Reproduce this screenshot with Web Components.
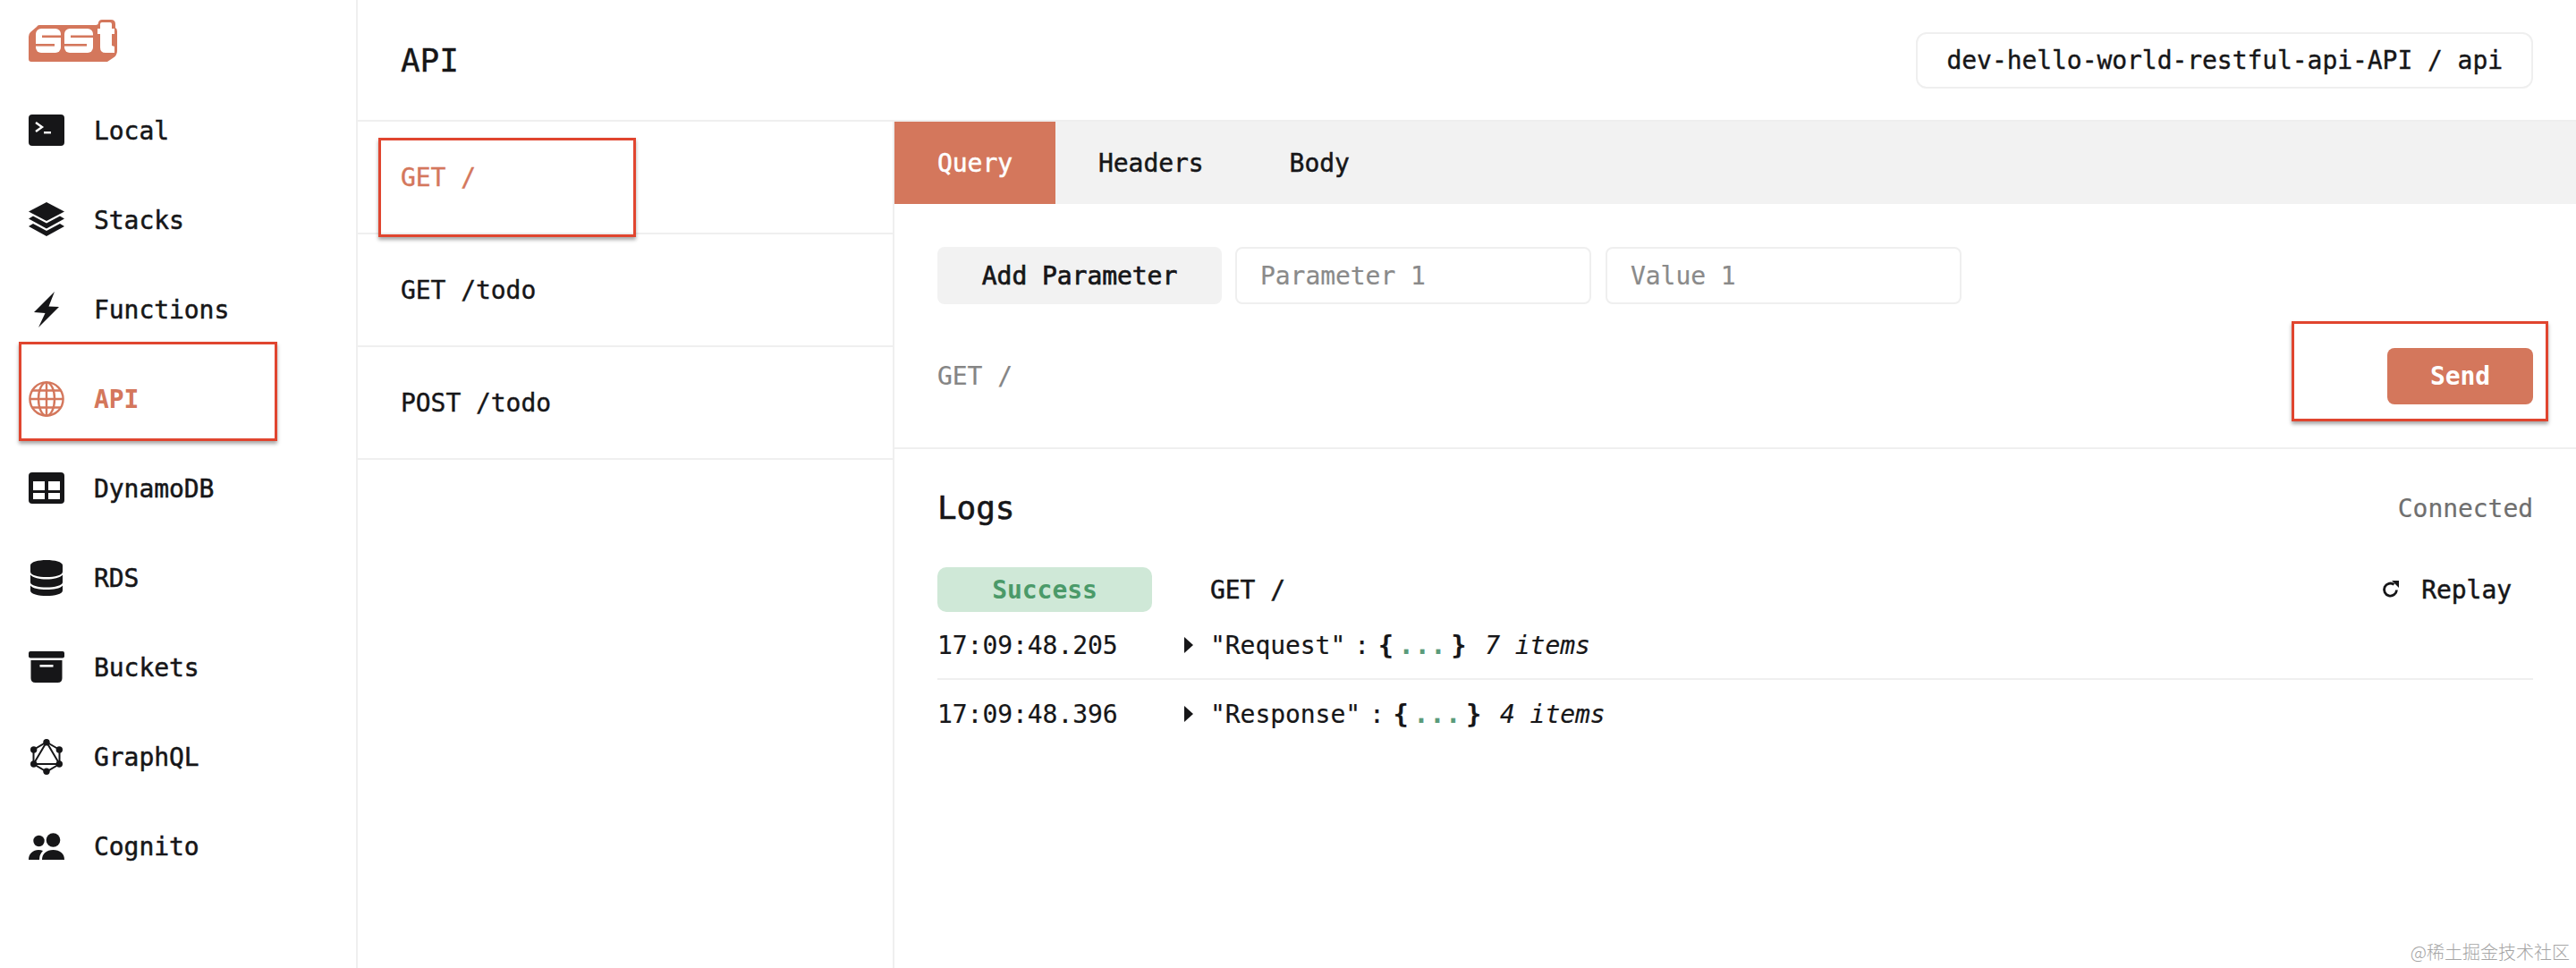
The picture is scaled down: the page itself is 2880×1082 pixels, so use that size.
<!DOCTYPE html>
<html lang="en">
<head>
<meta charset="utf-8">
<title>SST Console - API</title>
<style>
  html, body { margin: 0; background: #fff; }
  body {
    font-family: "DejaVu Sans Mono", "Liberation Mono", monospace;
    font-size: 28px;
    letter-spacing: -0.06px;
    color: #161618;
    -webkit-text-stroke: 0.2px currentColor;
  }
</style>
</head>
<body>

<sst-app>
  <sst-sidebar slot="sidebar">
    <svg slot="logo" width="99" height="49" viewBox="0 0 99 49">
      <path fill="#d4775c" d="M12 7H75Q78 7 78 4Q79 1 82 1H92Q97 1 97 6V10Q99 11 99 14V36Q99 41 94 44L88 48H3Q0 48 0 45V20Q0 17 2 15L9 9Q10 7 12 7Z"/>
      <g fill="#fff">
        <rect x="8" y="11" width="28" height="27" rx="6"/>
        <rect x="40" y="11" width="32" height="27" rx="6"/>
        <path d="M82 4H91Q93 4 93 6V11H96V17H93V30L96 31V38H86Q80 38 80 32V17H77V11H80V6Q80 4 82 4Z"/>
      </g>
      <g fill="#d4775c">
        <rect x="15" y="18.500" width="21" height="2.600"/>
        <rect x="8" y="28" width="21" height="2.600"/>
        <rect x="47" y="18.500" width="25" height="2.600"/>
        <rect x="40" y="28" width="25" height="2.600"/>
      </g>
    </svg>

    <sst-nav-item>
      <svg slot="icon" width="40" height="40" viewBox="0 0 40 40">
        <rect x="0" y="2" width="40" height="35" rx="4" fill="#161618"/>
        <path d="M8 11l7 5-7 5" fill="none" stroke="#fff" stroke-width="2.400"/>
        <rect x="17" y="21" width="8" height="2.400" fill="#fff"/>
      </svg>
      Local
    </sst-nav-item>
    <sst-nav-item>
      <svg slot="icon" width="40" height="40" viewBox="0 0 40 40" fill="#161618">
        <path d="M20 0L40 10.500 20 21 0 10.500Z"/>
        <path d="M5 15.500L20 23.400 35 15.500 40 18.500 20 29.500 0 18.500Z"/>
        <path d="M5 24L20 32 35 24 40 27 20 38 0 27Z"/>
      </svg>
      Stacks
    </sst-nav-item>
    <sst-nav-item>
      <svg slot="icon" width="40" height="40" viewBox="0 0 40 40" fill="#161618">
        <path d="M29 0L6 23L18.500 24L11 40L34 17L22.500 16.500Z"/>
      </svg>
      Functions
    </sst-nav-item>
    <sst-nav-item active>
      <svg slot="icon" width="40" height="40" viewBox="0 0 40 40" fill="none" stroke="#d4775c" stroke-width="2.400">
        <circle cx="20" cy="20" r="18.600"/>
        <ellipse cx="20" cy="20" rx="9" ry="18.600"/>
        <path d="M20 1.400V38.600M1.400 20H38.600M4 10.500H36M4 29.500H36"/>
      </svg>
      API
    </sst-nav-item>
    <sst-nav-item>
      <svg slot="icon" width="40" height="40" viewBox="0 0 40 40">
        <rect x="0" y="2" width="40" height="35" rx="4" fill="#161618"/>
        <path fill="#fff" d="M5 12H18V22H5ZM22 12H35V22H22ZM5 25H18V32H5ZM22 25H35V32H22Z"/>
      </svg>
      DynamoDB
    </sst-nav-item>
    <sst-nav-item>
      <svg slot="icon" width="40" height="40" viewBox="0 0 40 40" fill="#161618">
        <path d="M2 6C2 2 11 0 20 0S38 2 38 6V13C38 17 29 19 20 19S2 17 2 13Z"/>
        <path d="M2 16.500C5 20 12 21.500 20 21.500S35 20 38 16.500V25C38 28.500 29 30.500 20 30.500S2 28.500 2 25Z"/>
        <path d="M2 28.500C5 32 12 33 20 33S35 32 38 28.500V34C38 38 29 40 20 40S2 38 2 34Z"/>
      </svg>
      RDS
    </sst-nav-item>
    <sst-nav-item>
      <svg slot="icon" width="40" height="40" viewBox="0 0 40 40" fill="#161618">
        <rect x="0" y="2" width="40" height="7.500" rx="2"/>
        <path d="M2.500 12H37.500V32Q37.500 37 32.500 37H7.500Q2.500 37 2.500 32Z"/>
        <rect x="12.500" y="17" width="15" height="2.600" fill="#fff"/>
      </svg>
      Buckets
    </sst-nav-item>
    <sst-nav-item>
      <svg slot="icon" width="40" height="40" viewBox="0 0 40 40">
        <g fill="none" stroke="#161618" stroke-width="2">
          <path d="M20 3.500L34.500 12V28L20 36.500L5.500 28V12Z"/>
          <path d="M20 3.500L34.500 28H5.500Z"/>
        </g>
        <g fill="#161618">
          <circle cx="20" cy="3.700" r="3.700"/>
          <circle cx="34.300" cy="12" r="3.700"/>
          <circle cx="34.300" cy="28" r="3.700"/>
          <circle cx="20" cy="36.300" r="3.700"/>
          <circle cx="5.700" cy="28" r="3.700"/>
          <circle cx="5.700" cy="12" r="3.700"/>
        </g>
      </svg>
      GraphQL
    </sst-nav-item>
    <sst-nav-item>
      <svg slot="icon" width="40" height="40" viewBox="0 0 40 40" fill="#161618">
        <circle cx="11.500" cy="14" r="6.200"/>
        <circle cx="27.500" cy="13" r="7.800"/>
        <path d="M15 35C15 28 20 24 27.500 24S40 28 40 35Z"/>
        <path d="M0 35C0 28 5 24 11 24Q14 24 16 25Q12 29 12 35Z"/>
      </svg>
      Cognito
    </sst-nav-item>
  </sst-sidebar>

  <sst-header slot="header" title-text="API">dev-hello-world-restful-api-API / api</sst-header>

  <sst-route-list slot="routes">
    <sst-route active>GET /</sst-route>
    <sst-route>GET /todo</sst-route>
    <sst-route>POST /todo</sst-route>
  </sst-route-list>

  <sst-explorer slot="detail">
    <sst-tabs slot="tabs">
      <sst-tab active>Query</sst-tab>
      <sst-tab>Headers</sst-tab>
      <sst-tab>Body</sst-tab>
    </sst-tabs>
    <sst-request slot="request" route="GET /"></sst-request>
    <sst-logs slot="logs">
      <sst-log-row time="17:09:48.205" name="Request" count="7 items"></sst-log-row>
      <sst-log-row time="17:09:48.396" name="Response" count="4 items"></sst-log-row>
    </sst-logs>
  </sst-explorer>

  <sst-callout slot="overlay" style="left:21px;top:382px;width:289px;height:111px"></sst-callout>
  <sst-callout slot="overlay" style="left:423px;top:154px;width:288px;height:111px"></sst-callout>
  <sst-callout slot="overlay" style="left:2562px;top:359px;width:287px;height:112px"></sst-callout>
  <sst-watermark slot="overlay">@稀土掘金技术社区</sst-watermark>
</sst-app>

<script>
class SstApp extends HTMLElement {
  constructor() {
    super();
    const shadow = this.attachShadow({ mode: 'open' });
    shadow.innerHTML = `
      <style>
        :host {
          display: grid;
          position: relative;
          grid-template-columns: 400px 600px 1fr;
          grid-template-rows: 136px 1fr;
          height: 1082px;
          overflow: hidden;
        }
        .side { grid-row: 1 / 3; display: grid; }
        .head { grid-column: 2 / 4; display: grid; }
      </style>
      <div class="side"><slot name="sidebar"></slot></div>
      <div class="head"><slot name="header"></slot></div>
      <slot name="routes"></slot>
      <slot name="detail"></slot>
      <slot name="overlay"></slot>
    `;
  }
}

class SstSidebar extends HTMLElement {
  constructor() {
    super();
    const shadow = this.attachShadow({ mode: 'open' });
    shadow.innerHTML = `
      <style>
        :host {
          display: block;
          border-right: 2px solid #efefef;
          padding: 21px 0 0 32px;
        }
        .logo { height: 75px; }
        nav { display: flex; flex-direction: column; }
      </style>
      <div class="logo"><slot name="logo"></slot></div>
      <nav><slot></slot></nav>
    `;
  }
}

class SstNavItem extends HTMLElement {
  constructor() {
    super();
    const shadow = this.attachShadow({ mode: 'open' });
    shadow.innerHTML = `
      <style>
        :host {
          display: flex;
          align-items: center;
          gap: 33px;
          height: 100px;
          -webkit-text-stroke: 0.5px currentColor;
        }
        :host([active]) { color: #d4775c; font-weight: 700; -webkit-text-stroke: 0; }
        .icon { display: flex; width: 40px; height: 40px; }
      </style>
      <span class="icon"><slot name="icon"></slot></span>
      <span><slot></slot></span>
    `;
  }
}

class SstHeader extends HTMLElement {
  constructor() {
    super();
    const shadow = this.attachShadow({ mode: 'open' });
    shadow.innerHTML = `
      <style>
        :host {
          display: flex;
          align-items: center;
          justify-content: space-between;
          padding: 0 48px;
          border-bottom: 2px solid #efefef;
          -webkit-text-stroke: 0.4px currentColor;
        }
        h1 { margin: 0; font-size: 36px; font-weight: 400; }
        .pill {
          height: 63px;
          box-sizing: border-box;
          display: flex;
          align-items: center;
          padding: 0 32px;
          border: 2px solid #efefef;
          border-radius: 12px;
        }
      </style>
      <h1>${this.getAttribute('title-text')}</h1>
      <div class="pill"><slot></slot></div>
    `;
  }
}

class SstRouteList extends HTMLElement {
  constructor() {
    super();
    const shadow = this.attachShadow({ mode: 'open' });
    shadow.innerHTML = `
      <style>
        :host { display: block; border-right: 2px solid #efefef; }
      </style>
      <slot></slot>
    `;
  }
}

class SstRoute extends HTMLElement {
  constructor() {
    super();
    const shadow = this.attachShadow({ mode: 'open' });
    shadow.innerHTML = `
      <style>
        :host {
          display: flex;
          align-items: center;
          box-sizing: border-box;
          height: 126px;
          padding-left: 48px;
          border-bottom: 2px solid #efefef;
          -webkit-text-stroke: 0.4px currentColor;
        }
        :host([active]) { color: #d4775c; }
      </style>
      <slot></slot>
    `;
  }
}

class SstExplorer extends HTMLElement {
  constructor() {
    super();
    const shadow = this.attachShadow({ mode: 'open' });
    shadow.innerHTML = `
      <style>
        :host { display: flex; flex-direction: column; }
      </style>
      <slot name="tabs"></slot>
      <slot name="request"></slot>
      <slot name="logs"></slot>
    `;
  }
}

class SstTabs extends HTMLElement {
  constructor() {
    super();
    const shadow = this.attachShadow({ mode: 'open' });
    shadow.innerHTML = `
      <style>
        :host { display: flex; height: 92px; background: #f2f2f2; }
      </style>
      <slot></slot>
    `;
  }
}

class SstTab extends HTMLElement {
  constructor() {
    super();
    const shadow = this.attachShadow({ mode: 'open' });
    shadow.innerHTML = `
      <style>
        :host {
          display: flex;
          align-items: center;
          padding: 0 48px;
          -webkit-text-stroke: 0.5px currentColor;
        }
        :host([active]) { background: #d4775c; color: #fff; }
      </style>
      <slot></slot>
    `;
  }
}

class SstRequest extends HTMLElement {
  constructor() {
    super();
    const shadow = this.attachShadow({ mode: 'open' });
    shadow.innerHTML = `
      <style>
        :host {
          display: flex;
          flex-direction: column;
          gap: 49px;
          padding: 48px 48px 48px;
          border-bottom: 2px solid #efefef;
        }
        .params { display: flex; gap: 16px; height: 64px; }
        .add {
          width: 318px;
          display: flex;
          align-items: center;
          justify-content: center;
          background: #f2f2f2;
          border-radius: 8px;
          -webkit-text-stroke: 0.7px currentColor;
          margin-right: -1px;
        }
        .field {
          width: 398px;
          box-sizing: border-box;
          display: flex;
          align-items: center;
          padding-left: 26px;
          border: 2px solid #efefef;
          border-radius: 8px;
          color: #8a8a8a;
        }
        .send-row { display: flex; align-items: center; justify-content: space-between; }
        .route { color: #858585; }
        .send {
          width: 163px;
          height: 63px;
          display: flex;
          align-items: center;
          justify-content: center;
          background: #d4775c;
          color: #fff;
          border-radius: 8px;
          font-weight: 700;
          -webkit-text-stroke: 0;
        }
      </style>
      <div class="params">
        <div class="add">Add Parameter</div>
        <div class="field">Parameter 1</div>
        <div class="field">Value 1</div>
      </div>
      <div class="send-row">
        <span class="route">${this.getAttribute('route')}</span>
        <span class="send">Send</span>
      </div>
    `;
  }
}

class SstLogs extends HTMLElement {
  constructor() {
    super();
    const shadow = this.attachShadow({ mode: 'open' });
    shadow.innerHTML = `
      <style>
        :host { display: block; padding: 47px 48px 0; }
        .top { display: flex; align-items: center; justify-content: space-between; height: 36px; }
        h2 { margin: 0; font-size: 36px; font-weight: 400; -webkit-text-stroke: 0.6px currentColor; }
        .state { color: #6f6f6f; padding-top: 2px; }
        .entry { display: flex; align-items: center; height: 50px; margin-top: 49px; }
        .badge {
          width: 240px;
          height: 50px;
          display: flex;
          align-items: center;
          justify-content: center;
          background: #cfe8d7;
          color: #4b9a69;
          border-radius: 10px;
          font-weight: 700;
          -webkit-text-stroke: 0;
        }
        .method { margin-left: 65px; flex: 1; -webkit-text-stroke: 0.5px currentColor; }
        .replay {
          display: flex;
          align-items: center;
          gap: 24px;
          padding-right: 24px;
          -webkit-text-stroke: 0.5px currentColor;
        }
      </style>
      <div class="top"><h2>Logs</h2><span class="state">Connected</span></div>
      <div class="entry">
        <span class="badge">Success</span>
        <span class="method">GET /</span>
        <span class="replay">
          <svg width="20" height="20" viewBox="0 0 20 20" fill="none">
            <path d="M16.500 10.500A7 7 0 1 1 13.500 4.300" stroke="#161618" stroke-width="2.800"/>
            <path d="M11 0H19V8Z" fill="#161618"/>
          </svg>
          Replay
        </span>
      </div>
      <slot></slot>
    `;
  }
}

class SstLogRow extends HTMLElement {
  constructor() {
    super();
    const shadow = this.attachShadow({ mode: 'open' });
    shadow.innerHTML = `
      <style>
        :host {
          display: flex;
          align-items: center;
          height: 76px;
          box-sizing: border-box;
          border-bottom: 2px solid #efefef;
        }
        :host(:last-child) { border-bottom: 0; }
        .time { width: 276px; }
        .caret {
          width: 0;
          height: 0;
          border-left: 10px solid #161618;
          border-top: 9px solid transparent;
          border-bottom: 9px solid transparent;
          margin-right: 19px;
        }
        .colon { margin: 0 8px 0 10px; }
        .brace { font-weight: 700; margin-left: 2px; }
        .dots { color: #5a9b7a; font-weight: 700; letter-spacing: 1px; margin: 0 5px 0 6px; }
        .count { font-style: italic; margin-left: 21px; }
      </style>
      <span class="time">${this.getAttribute('time')}</span>
      <span class="caret"></span>
      <span>"${this.getAttribute('name')}"</span>
      <span class="colon">:</span>
      <span class="brace">{</span>
      <span class="dots">...</span>
      <span class="brace" style="margin-left:0">}</span>
      <span class="count">${this.getAttribute('count')}</span>
    `;
  }
}

class SstCallout extends HTMLElement {
  constructor() {
    super();
    const shadow = this.attachShadow({ mode: 'open' });
    shadow.innerHTML = `
      <style>
        :host {
          position: absolute;
          box-sizing: border-box;
          border: 3px solid #e0452f;
          box-shadow: 0 3px 4px rgba(0, 0, 0, 0.35);
        }
      </style>
    `;
  }
}

class SstWatermark extends HTMLElement {
  constructor() {
    super();
    const shadow = this.attachShadow({ mode: 'open' });
    shadow.innerHTML = `
      <style>
        :host {
          position: absolute;
          right: 7px;
          bottom: 4px;
          font-family: "Noto Sans CJK SC", "Noto Sans", sans-serif;
          font-size: 20px;
          font-weight: 300;
          letter-spacing: 0;
          -webkit-text-stroke: 0;
          color: #a5a5a5;
        }
      </style>
      <slot></slot>
    `;
  }
}

customElements.define('sst-app', SstApp);
customElements.define('sst-sidebar', SstSidebar);
customElements.define('sst-nav-item', SstNavItem);
customElements.define('sst-header', SstHeader);
customElements.define('sst-route-list', SstRouteList);
customElements.define('sst-route', SstRoute);
customElements.define('sst-explorer', SstExplorer);
customElements.define('sst-tabs', SstTabs);
customElements.define('sst-tab', SstTab);
customElements.define('sst-request', SstRequest);
customElements.define('sst-logs', SstLogs);
customElements.define('sst-log-row', SstLogRow);
customElements.define('sst-callout', SstCallout);
customElements.define('sst-watermark', SstWatermark);
</script>
</body>
</html>
